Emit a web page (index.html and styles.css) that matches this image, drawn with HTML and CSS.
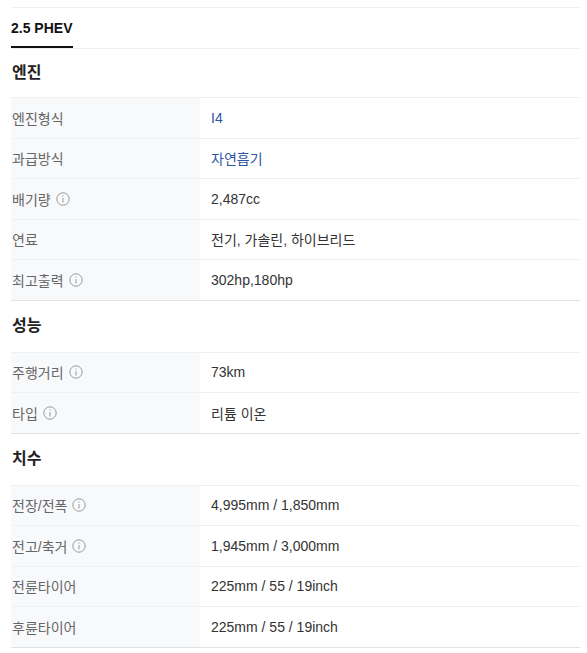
FILE: index.html
```html
<!DOCTYPE html>
<html lang="ko">
<head>
    <meta charset="UTF-8">
    <meta name="viewport" content="width=device-width, initial-scale=1.0">
    <title>2.5 PHEV 제원</title>
    <link rel="stylesheet" href="styles.css">
</head>
<body>
    <div class="spec-wrap">
        <div class="tabs">
            <span class="tab active">2.5 PHEV</span>
        </div>

        <div class="section">
            <h3>엔진</h3>
            <div class="row"><div class="label">엔진형식</div><div class="value link">I4</div></div>
            <div class="row"><div class="label">과급방식</div><div class="value link">자연흡기</div></div>
            <div class="row"><div class="label">배기량 <svg class="info" viewBox="0 0 14 14"><circle cx="7" cy="7" r="6.2"/><line x1="7" y1="6" x2="7" y2="10.5"/><line x1="7" y1="3.4" x2="7" y2="4.6"/></svg></div><div class="value">2,487cc</div></div>
            <div class="row"><div class="label">연료</div><div class="value">전기, 가솔린, 하이브리드</div></div>
            <div class="row"><div class="label">최고출력 <svg class="info" viewBox="0 0 14 14"><circle cx="7" cy="7" r="6.2"/><line x1="7" y1="6" x2="7" y2="10.5"/><line x1="7" y1="3.4" x2="7" y2="4.6"/></svg></div><div class="value">302hp,180hp</div></div>
        </div>

        <div class="section">
            <h3>성능</h3>
            <div class="row"><div class="label">주행거리 <svg class="info" viewBox="0 0 14 14"><circle cx="7" cy="7" r="6.2"/><line x1="7" y1="6" x2="7" y2="10.5"/><line x1="7" y1="3.4" x2="7" y2="4.6"/></svg></div><div class="value">73km</div></div>
            <div class="row"><div class="label">타입 <svg class="info" viewBox="0 0 14 14"><circle cx="7" cy="7" r="6.2"/><line x1="7" y1="6" x2="7" y2="10.5"/><line x1="7" y1="3.4" x2="7" y2="4.6"/></svg></div><div class="value">리튬 이온</div></div>
        </div>

        <div class="section">
            <h3>치수</h3>
            <div class="row"><div class="label">전장/전폭 <svg class="info" viewBox="0 0 14 14"><circle cx="7" cy="7" r="6.2"/><line x1="7" y1="6" x2="7" y2="10.5"/><line x1="7" y1="3.4" x2="7" y2="4.6"/></svg></div><div class="value">4,995mm / 1,850mm</div></div>
            <div class="row"><div class="label">전고/축거 <svg class="info" viewBox="0 0 14 14"><circle cx="7" cy="7" r="6.2"/><line x1="7" y1="6" x2="7" y2="10.5"/><line x1="7" y1="3.4" x2="7" y2="4.6"/></svg></div><div class="value">1,945mm / 3,000mm</div></div>
            <div class="row"><div class="label">전륜타이어</div><div class="value">225mm / 55 / 19inch</div></div>
            <div class="row"><div class="label">후륜타이어</div><div class="value">225mm / 55 / 19inch</div></div>
        </div>
    </div>
</body>
</html>
```

FILE: styles.css
```css
body {
    margin: 0;
    background: #fff;
    font-family: "Liberation Sans", "Noto Sans CJK KR", sans-serif;
    color: #333;
}
.spec-wrap {
    width: 569px;
    margin-left: 11px;
    padding-top: 7px;
}
.tabs {
    border-top: 1px solid #f0f0f0;
    border-bottom: 1px solid #f0f0f0;
    height: 40px;
    display: flex;
}
.tab {
    font-size: 14px;
    font-weight: 700;
    color: #111;
    line-height: 40px;
    height: 38px;
    border-bottom: 2px solid #111;
    width: 62px;
}
.section {
    border-bottom: 1px solid #e2e2e2;
}
.section h3 {
    margin: 0;
    height: 51px;
    line-height: 50px;
    font-size: 16px;
    font-weight: 700;
    color: #222;
    padding-left: 1px;
}
.tabs + .section h3 {
    height: 48px;
    line-height: 48px;
}
.row {
    display: flex;
    height: 39.5px;
    border-top: 1px solid #f0f0f0;
    font-size: 14px;
}
.label {
    width: 189px;
    background: #f8f9fb;
    color: #666;
    display: flex;
    align-items: center;
    gap: 5px;
    padding-left: 1px;
    box-sizing: border-box;
}
.value {
    padding-left: 11px;
    display: flex;
    align-items: center;
    color: #333;
}
.value.link {
    color: #2d55a3;
}
.info {
    width: 14px;
    height: 14px;
    fill: none;
    stroke: #999;
    stroke-width: 1;
}
```
